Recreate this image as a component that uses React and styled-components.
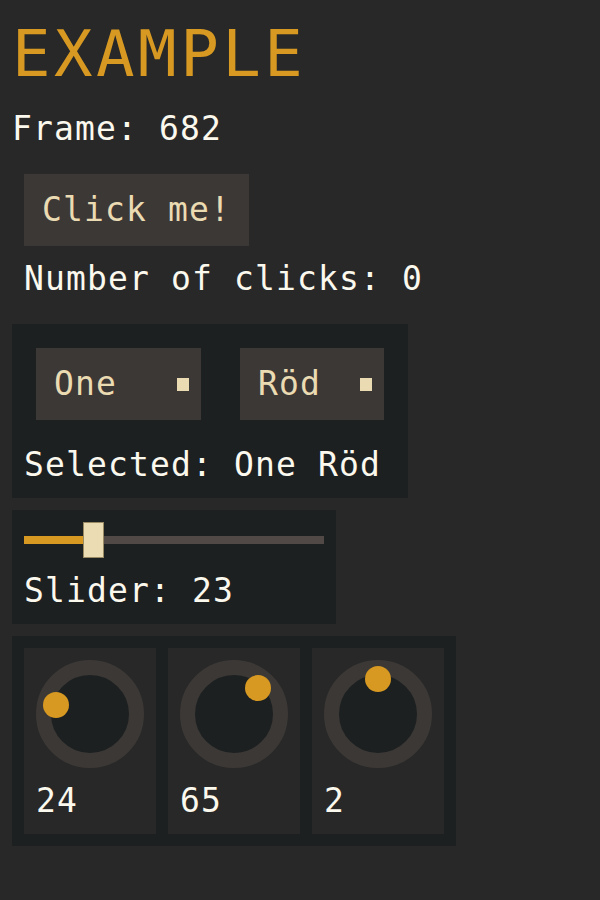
import React from "react";
import styled, { createGlobalStyle } from "styled-components";

const Global = createGlobalStyle`
  html, body { margin: 0; padding: 0; background: #282828; }
  body { font-family: "DejaVu Sans Mono", "Liberation Mono", monospace; }
`;

const Page = styled.div`
  display: flex;
  flex-direction: column;
  align-items: flex-start;
  gap: 12px;
  padding: 12px;
  min-height: 900px;
  box-sizing: border-box;
  background: #282828;
`;

const Title = styled.h1`
  margin: 0;
  font-family: "DejaVu Sans Mono", monospace;
  font-weight: normal;
  font-size: 64px;
  letter-spacing: 3.5px;
  line-height: 84px;
  color: #d79921;
`;

const Text = styled.div`
  font-size: 33px;
  letter-spacing: 1.13px;
  line-height: 42px;
  color: ${(p) => p.$color || "#fbf8ee"};
  white-space: pre;
`;

const Group = styled.div`
  display: flex;
  flex-direction: column;
  align-items: flex-start;
  gap: 12px;
  padding: 12px;
`;

const Button = styled.button`
  border: none;
  margin: 0;
  background: #3c3836;
  height: 72px;
  padding: 0 18px;
  font-family: "DejaVu Sans Mono", monospace;
  font-size: 33px;
  letter-spacing: 1.13px;
  line-height: 42px;
  color: #ebdbb2;
  cursor: pointer;
`;

const Panel = styled.div`
  display: flex;
  flex-direction: ${(p) => (p.$row ? "row" : "column")};
  align-items: flex-start;
  gap: 12px;
  padding: 12px;
  background: #1d2021;
`;

const SelectRow = styled.div`
  display: flex;
  gap: 39px;
  padding: 12px;
`;

const Select = styled.div`
  display: flex;
  align-items: center;
  height: 72px;
  padding: 0 12px 0 18px;
  background: #3c3836;
  gap: 18px;
`;

const SelectLabel = styled(Text)`
  color: #ebdbb2;
  width: ${(p) => p.$chars * 21}px;
`;

const Square = styled.span`
  display: block;
  width: 12px;
  height: 13px;
  background: #ebdbb2;
`;

const SliderRow = styled.div`
  position: relative;
  width: 300px;
  height: 36px;
  display: flex;
  align-items: center;
`;

const Track = styled.div`
  position: relative;
  width: 100%;
  height: 8px;
  background: #504945;
`;

const Fill = styled.div`
  position: absolute;
  left: 0;
  top: 0;
  height: 100%;
  background: #d79921;
`;

const Thumb = styled.div`
  position: absolute;
  top: 0;
  width: 21px;
  height: 36px;
  box-sizing: border-box;
  background: #ebdcb4;
  border: 1px solid #9a8a64;
`;

const Card = styled.div`
  display: flex;
  flex-direction: column;
  align-items: flex-start;
  gap: 12px;
  width: 132px;
  box-sizing: border-box;
  padding: 12px;
  background: #282828;
`;

const Knob = styled.div`
  position: relative;
  width: 108px;
  height: 108px;
  box-sizing: border-box;
  border-radius: 50%;
  border: 15px solid #3c3836;
  background: #1d2021;
`;

const Dot = styled.div`
  position: absolute;
  width: 26px;
  height: 26px;
  border-radius: 50%;
  background: #d79921;
  margin-left: -13px;
  margin-top: -13px;
`;

function KnobCard({ value, angle }) {
  const r = 35;
  const a = (angle * Math.PI) / 180;
  const cx = 39 + r * Math.sin(a);
  const cy = 39 - r * Math.cos(a);
  return (
    <Card>
      <Knob>
        <Dot style={{ left: cx, top: cy }} />
      </Knob>
      <Text>{value}</Text>
    </Card>
  );
}

export default function App() {
  const sliderPos = 59;
  return (
    <>
      <Global />
      <Page>
        <Title>EXAMPLE</Title>
        <Text>Frame: 682</Text>
        <Group>
          <Button>Click me!</Button>
          <Text>Number of clicks: 0</Text>
        </Group>
        <Panel>
          <SelectRow>
            <Select>
              <SelectLabel $chars={5}>One</SelectLabel>
              <Square />
            </Select>
            <Select>
              <SelectLabel $chars={4}>Röd</SelectLabel>
              <Square />
            </Select>
          </SelectRow>
          <Text>Selected: One Röd</Text>
        </Panel>
        <Panel>
          <SliderRow>
            <Track>
              <Fill style={{ width: sliderPos }} />
            </Track>
            <Thumb style={{ left: sliderPos }} />
          </SliderRow>
          <Text>Slider: 23</Text>
        </Panel>
        <Panel $row>
          <KnobCard value="24" angle={-75} />
          <KnobCard value="65" angle={43} />
          <KnobCard value="2" angle={0} />
        </Panel>
      </Page>
    </>
  );
}
